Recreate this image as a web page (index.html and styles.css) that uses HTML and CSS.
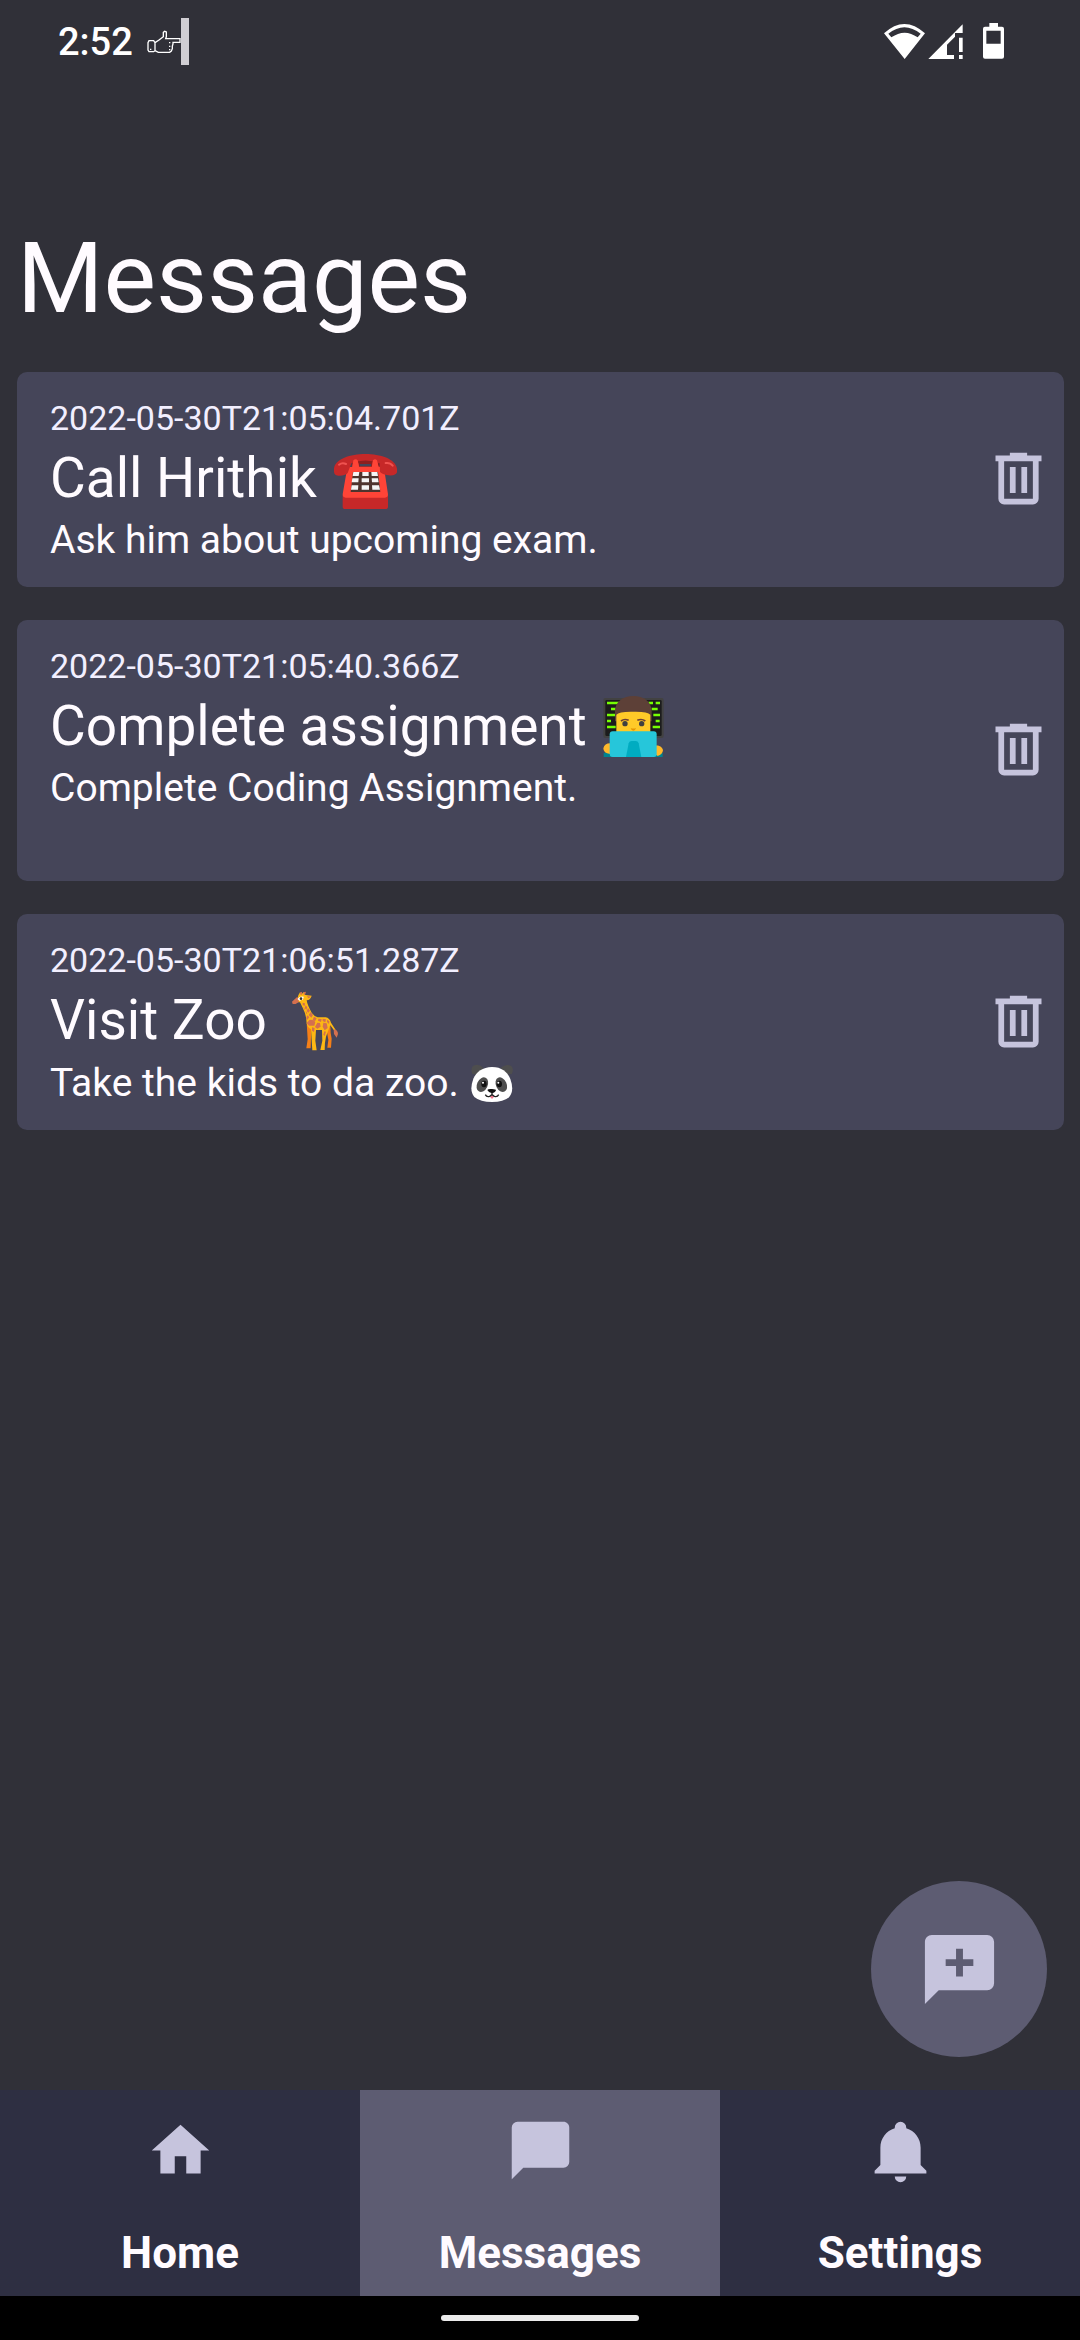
FILE: index.html
```html
<!DOCTYPE html>
<html lang="en">
<head>
<meta charset="utf-8">
<meta name="viewport" content="width=device-width, initial-scale=1">
<title>Messages</title>
<link rel="stylesheet" href="styles.css">
</head>
<body>
<svg class="sprite" aria-hidden="true">
  <symbol id="trash" viewBox="0 0 24 24"><path d="M9,3V4H4V6H5V19A2,2 0 0,0 7,21H17A2,2 0 0,0 19,19V6H20V4H15V3H9M7,6H17V19H7V6M9,8V17H11V8H9M13,8V17H15V8H13Z"/></symbol>
</svg>
<header class="status">
  <div class="status-left">
    <span class="clock">2:52</span>
    <svg class="hand" width="42" height="48" viewBox="0 0 126 144" aria-hidden="true">
      <path d="M6 68H20L24 74V98L20 101H6L3 96V74ZM24 74L36 66L49 56V43L53 40L58 42V56L56 62H99V73H78V78L76 84V92L73 99L68 103H34L24 98" fill="none" stroke="#fff" stroke-width="4"/>
      <path d="M66 72h4v4h-4zM66 83h4v4h-4zM66 93h4v4h-4zM9 92h4v4H9z" fill="#fff"/>
      <path d="M102 0h24v141h-24z" fill="#d0ced3"/>
    </svg>
  </div>
  <svg class="signals" width="122" height="40" viewBox="69 66 366 120" aria-hidden="true">
    <path fill="#fff" fill-rule="evenodd" d="M69 100Q130 44 192 100L131 177ZM82 101L91 112Q131 84 170 112L179 101Q130 62 82 101Z"/>
    <path fill="#fff" d="M202 177L305 73V99H282V110L258 134V165H279V177ZM294 113h11v43h-11zM294 165h11v12h-11z"/>
    <path fill="#fff" fill-rule="evenodd" d="M385 69h26v11h12q6 0 6 6v84q0 6-6 6h-51q-6 0-6-6V86q0-6 6-6h13ZM376 92v39h43V92Z"/>
  </svg>
</header>
<main class="screen">
  <h1 class="heading">Messages</h1>
  <ul class="list">
    <li class="card">
      <div class="card-text">
        <time class="date">2022-05-30T21:05:04.701Z</time>
        <h2 class="title">Call Hrithik <svg class="emoji" viewBox="60 48 204 192" role="img" aria-label="telephone">
          <path fill="#8e1f1f" d="M122 84h84v28h-84z"/>
          <path fill="#454559" d="M146 102h34v7h-34z"/>
          <path fill="#c62828" d="M95 196H231V230Q231 237 223 237H103Q95 237 95 230Z"/>
          <path fill="#ff4437" d="M127 91Q134 84 140 91L144 110H183L186 91Q192 84 198 91L202 110H213Q219 112 220 120L231 193Q231 203 222 203H104Q95 203 95 193L108 118Q110 112 116 111H124Z"/>
          <path fill="#c62828" d="M69 116C72 87 118 72 163 72S253 86 258 116V127Q255 138 232 136Q213 133 207 126L206 100Q163 83 121 100L110 129Q101 138 82 137Q69 135 69 125Z"/>
          <path fill="#ff4437" d="M127 91Q134 84 140 91L144 112H124ZM186 91Q192 84 198 91L203 112H183Z"/>
          <path d="M84 104Q94 96 105 102M224 99Q237 97 245 107" stroke="#ef5350" stroke-width="6" fill="none" stroke-linecap="round"/>
          <path fill="#4e342e" d="M126 126H201L208 186H119Z"/>
          <path fill="#f5f5f5" d="M127 126h18l-2 12h-18zM154 126h19v12h-19zM181 126h18l2 12h-19zM124 145h19l-1 12h-20zM152 145h22v12h-22zM182 145h19l2 12h-20zM122 166h20l-1 13h-21zM152 166h22v13h-22zM183 166h21l3 13h-23z"/>
        </svg></h2>
        <p class="body">Ask him about upcoming exam.</p>
      </div>
      <button class="delete" type="button" aria-label="Delete"><svg class="icon"><use href="#trash"/></svg></button>
    </li>
    <li class="card">
      <div class="card-text">
        <time class="date">2022-05-30T21:05:40.366Z</time>
        <h2 class="title">Complete assignment <svg class="emoji" viewBox="117 42 204 192" role="img" aria-label="man technologist">
          <rect x="127" y="54" width="181" height="120" rx="6" fill="#424242"/>
          <rect x="133" y="60" width="169" height="108" rx="4" fill="#1c1c1c"/>
          <path d="M138 69h36M150 87h14M138 105h26M138 123h12M138 141h26M262 69h14M284 69h13M272 87h18M277 105h20M284 123h12M275 141h22" stroke="#76ff03" stroke-width="7"/>
          <path fill="#5d4037" d="M162 124V94C162 64 187 48 217 48S272 64 272 94V124Z"/>
          <path fill="#ffca28" d="M166 104Q174 94 217 95Q260 94 268 104V160H166Z"/>
          <path d="M180 123Q190 115 203 121M229 121Q242 115 253 123" stroke="#6d4034" stroke-width="5" fill="none"/>
          <circle cx="192" cy="131" r="8" fill="#404040"/><circle cx="242" cy="131" r="8" fill="#404040"/>
          <path d="M209 144Q217 147 225 144Q223 152 217 152T209 144Z" fill="#e59600"/>
          <path d="M128 218H305V231H128Z" fill="#00838f"/>
          <path d="M147 190Q131 190 127 205Q127 220 147 222ZM286 196Q303 198 306 210Q305 224 290 228L280 220Z" fill="#ffb92b"/>
          <rect x="146" y="154" width="141" height="77" rx="9" fill="#26c6da"/>
          <path d="M195 231L203 190Q205 183 212 183H224Q231 183 233 190L241 231Z" fill="#00acc1"/>
        </svg></h2>
        <p class="body">Complete Coding Assignment.<br><br></p>
      </div>
      <button class="delete" type="button" aria-label="Delete"><svg class="icon"><use href="#trash"/></svg></button>
    </li>
    <li class="card">
      <div class="card-text">
        <time class="date">2022-05-30T21:06:51.287Z</time>
        <h2 class="title">Visit Zoo <svg class="emoji" viewBox="30 54 204 192" role="img" aria-label="giraffe">
          <path fill="#f57f17" d="M107 158L121 168L119 235H106L110 208ZM166 176L178 168Q178 190 182 206L180 233H169L172 210Z"/>
          <path fill="#fdb813" d="M82 76L87 67L92 73L98 66L103 75L122 77Q119 89 107 91Q109 105 122 128Q130 139 140 142H164Q176 144 180 158L196 183L191 184L178 166Q171 183 165 200Q161 216 161 240H148L154 212L153 180H135L133 212L137 241H124L122 210L120 178Q106 171 106 150Q105 132 95 113L87 97L77 97Z"/>
          <path fill="#d4704f" d="M63 95L79 80L84 95L74 102H65ZM188 178Q201 180 201 192L197 203L189 192ZM102 74L105 66L102 65ZM88 66h5v8h-5zM98 66h4v8h-4zM108 78l12 2-8 5z"/>
          <path fill="#d4704f" d="M95 98l7 2-1 8-6-3zM104 106l5 6-3 7-5-5zM97 110l4 7-1 4zM111 114l6 8-5 6-5-5zM104 122l5 8-3 2zM119 126l7 9-5 8-8-8zM108 136l7 5-6 8-3-3zM129 140l8 5-5 9-7-5zM115 150q10-3 18 6l-3 11-16 0-7-8zM142 146l10 1-2 9-9-4zM155 146l10 2-2 9-8-4zM139 158l8 1 2 11-10 6-7-5zM157 158l10 2 3 14-9 7-6-11zM168 149l7 5-1 8-6-6zM123 172l8 2-2 12-6-4zM160 184l5 1-4 13-4-4z"/>
          <path d="M83 90Q89 83 97 85" stroke="#fff" stroke-width="10"/><circle cx="90" cy="86" r="4" fill="#333"/>
        </svg></h2>
        <p class="body">Take the kids to da zoo. <svg class="emoji emoji-small" viewBox="598 267 144 135" role="img" aria-label="panda">
          <path fill="#4e4e4e" d="M611 312Q604 292 617 286T644 293L631 315ZM729 312Q737 295 727 287Q711 281 696 293L711 315Z"/>
          <path fill="#fff" d="M670 291C700 291 717 307 725 327Q738 363 721 382Q705 396 670 396T617 381Q601 362 614 326C623 306 642 291 670 291Z"/>
          <ellipse cx="641" cy="344" rx="16" ry="23" transform="rotate(25 641 344)" fill="#4e4e4e"/>
          <ellipse cx="698" cy="344" rx="16" ry="23" transform="rotate(-25 698 344)" fill="#4e4e4e"/>
          <ellipse cx="646" cy="342" rx="8" ry="10" fill="#111"/><ellipse cx="692" cy="342" rx="8" ry="10" fill="#111"/>
          <circle cx="643" cy="338" r="3" fill="#fff"/><circle cx="689" cy="338" r="3" fill="#fff"/>
          <path d="M656 360Q658 356 670 357T682 360Q681 367 670 370Q659 367 656 360Z" fill="#111"/>
          <path d="M664 378H676Q674 386 670 386T664 378Z" fill="#f0788c"/>
          <path d="M650 374Q654 382 663 379L670 374L677 379Q686 382 690 374M670 368V376" stroke="#222" stroke-width="4" fill="none"/>
        </svg></p>
      </div>
      <button class="delete" type="button" aria-label="Delete"><svg class="icon"><use href="#trash"/></svg></button>
    </li>
  </ul>
</main>
<footer class="footer">
  <button class="fab" type="button" aria-label="New message">
    <svg class="icon icon-large" viewBox="0 0 24 24"><path fill-rule="evenodd" d="M20,2A2,2 0 0,1 22,4V16A2,2 0 0,1 20,18H6L2,22V4C2,2.89 2.9,2 4,2H20M11,6V9H8V11H11V14H13V11H16V9H13V6H11Z"/></svg>
  </button>
  <nav class="tabs">
    <a class="tab" href="#home">
      <svg class="icon" viewBox="0 0 24 24"><path d="M10,20V14H14V20H19V12H22L12,3L2,12H5V20H10Z"/></svg>
      Home
    </a>
    <a class="tab tab-active" href="#messages" aria-current="page">
      <svg class="icon" viewBox="0 0 24 24"><path d="M20,2H4A2,2 0 0,0 2,4V22L6,18H20A2,2 0 0,0 22,16V4C22,2.89 21.1,2 20,2Z"/></svg>
      Messages
    </a>
    <a class="tab" href="#settings">
      <svg class="icon" viewBox="0 0 24 24"><path d="M21,19V20H3V19L5,17V11C5,7.9 7.03,5.17 10,4.29C10,4.19 10,4.1 10,4A2,2 0 0,1 12,2A2,2 0 0,1 14,4C14,4.1 14,4.19 14,4.29C16.97,5.17 19,7.9 19,11V17L21,19M14,21A2,2 0 0,1 12,23A2,2 0 0,1 10,21"/></svg>
      Settings
    </a>
  </nav>
  <div class="gesture"><div class="pill"></div></div>
</footer>
</body>
</html>
```
FILE: styles.css
```css
* {
  box-sizing: border-box;
  margin: 0;
  padding: 0;
}

body {
  display: flex;
  flex-direction: column;
  min-height: 100vh;
  background: #303038;
  color: #fffbff;
  font-family: Roboto, "Liberation Sans", sans-serif;
}

button {
  border: 0;
  background: none;
  cursor: pointer;
}

.sprite {
  display: none;
}

.status {
  display: flex;
  justify-content: space-between;
  align-items: center;
  height: 83px;
  padding: 0 74px 0 58px;
}

.status-left {
  display: flex;
  align-items: center;
  gap: 14px;
}

.clock {
  color: #fff;
  font-size: 38px;
  font-weight: 500;
  line-height: 44px;
}

.screen {
  flex: 1;
  padding: 137px 16px 33px 17px;
}

.heading {
  font-size: 99px;
  font-weight: 400;
  line-height: 116px;
}

.list {
  display: flex;
  flex-direction: column;
  gap: 33px;
  margin-top: 36px;
  list-style: none;
}

.card {
  display: flex;
  align-items: center;
  padding: 22px 11px 24px 33px;
  border-radius: 10px;
  background: #454559;
}

.card-text {
  flex: 1;
}

.date {
  display: block;
  color: #f2efff;
  font-size: 34px;
  line-height: 48px;
}

.title {
  margin-bottom: 3px;
  font-size: 55px;
  font-weight: 400;
  line-height: 72px;
}

.body {
  font-size: 39px;
  line-height: 46px;
}

.emoji {
  width: 68px;
  height: 64px;
  vertical-align: -13px;
}

.emoji-small {
  width: 48px;
  height: 45px;
  vertical-align: -8px;
}

.icon {
  display: block;
  width: 69px;
  height: 69px;
  fill: #c6c4dd;
}

.icon-large {
  width: 83px;
  height: 83px;
}

.footer {
  position: sticky;
  bottom: 0;
}

.fab {
  position: absolute;
  right: 33px;
  bottom: calc(100% + 33px);
  display: grid;
  place-items: center;
  width: 176px;
  height: 176px;
  border-radius: 50%;
  background: #5d5c72;
}

.tabs {
  display: grid;
  grid-template-columns: repeat(3, 1fr);
  background: #2e2f42;
}

.tab {
  display: flex;
  flex-direction: column;
  align-items: center;
  gap: 42px;
  padding: 26px 0 17px;
  color: #fffbff;
  font-size: 44px;
  font-weight: 700;
  line-height: 52px;
  text-decoration: none;
}

.tab-active {
  background: #5d5c72;
}

.gesture {
  display: grid;
  place-items: center;
  height: 44px;
  background: #000;
}

.pill {
  width: 198px;
  height: 6px;
  border-radius: 3px;
  background: #ebebeb;
}
```
